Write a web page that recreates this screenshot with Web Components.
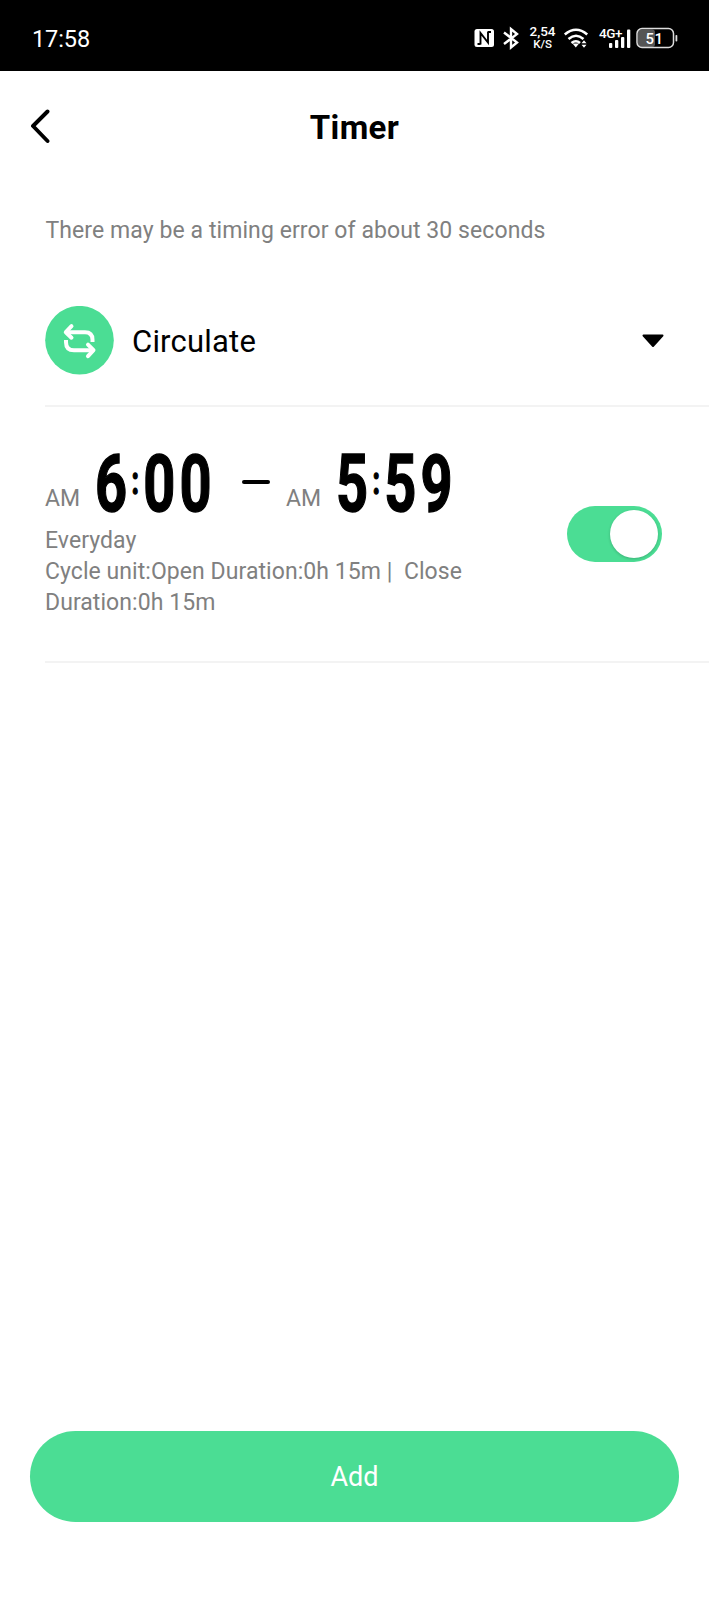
<!DOCTYPE html>
<html lang="en">
<head>
<meta charset="utf-8">
<title>Timer</title>
<style>
    body {
        margin: 0;
        background: #fff;
        font-family: Roboto, 'Liberation Sans', sans-serif;
    }
</style>
</head>
<body>

<timer-screen>
    <status-bar slot="status" time="17:58" battery="51"></status-bar>
    <nav-header slot="header">Timer</nav-header>
    <mode-row>Circulate</mode-row>
    <timer-card from="6:00" to="5:59">
        <div>Everyday</div>
        <div>Cycle unit:Open Duration:0h 15m |&nbsp; Close</div>
        <div>Duration:0h 15m</div>
    </timer-card>
    <add-button slot="footer">Add</add-button>
</timer-screen>

<script>
// small helper, every component clones its own template
function makeTemplate(html) {
    const template = document.createElement('template');
    template.innerHTML = html;
    return template;
}

// the whole screen
const screenTemplate = makeTemplate(`
    <style>
        :host {
            display: flex;
            flex-direction: column;
            height: 1600px;
            background: #fff;
        }

        .hint {
            margin: 0;
            padding: 32px 0 0 45.5px;
            height: 79px;
            box-sizing: border-box;
            font-size: 23px;
            line-height: 32px;
            letter-spacing: 0.08px;
            color: #808080;
            white-space: nowrap;
        }

        main {
            flex: 1;
        }
    </style>

    <slot name="status"></slot>
    <slot name="header"></slot>
    <main>
        <p class="hint">There may be a timing error of about 30 seconds</p>
        <slot></slot>
    </main>
    <slot name="footer"></slot>
`);

class TimerScreen extends HTMLElement {
    constructor() {
        super();
        this.attachShadow({ mode: 'open' });
        this.shadowRoot.appendChild(screenTemplate.content.cloneNode(true));
    }
}

// phone status bar
const statusTemplate = makeTemplate(`
    <style>
        :host {
            display: flex;
            justify-content: space-between;
            height: 71px;
            padding: 0 30px 0 32px;
            box-sizing: border-box;
            background: #000;
            color: #fff;
        }

        .time {
            padding-top: 25px;
            font-size: 23.5px;
            line-height: 28px;
            letter-spacing: -0.1px;
        }

        svg {
            display: block;
            margin-top: 20px;
        }
    </style>

    <span class="time"></span>
    <svg width="207" height="36" viewBox="472 20 207 36" fill="#fff" font-family="Roboto, sans-serif">
        <!-- nfc -->
        <rect x="474.500" y="29" width="19.500" height="18" rx="2.500"/>
        <path d="M480.500 44.500V33L488 42.500V31.500M477.500 44h3M488 32h3" fill="none" stroke="#000" stroke-width="1.900"/>
        <!-- bluetooth -->
        <path d="M504 32.500l13 10-6 5V29l6 5-13 10" fill="none" stroke="#fff" stroke-width="2.400"/>
        <!-- network speed -->
        <text x="542.500" y="36" font-size="13.500" font-weight="500" text-anchor="middle">2,54</text>
        <text x="542.500" y="48" font-size="11.500" font-weight="500" text-anchor="middle">K/S</text>
        <!-- wifi -->
        <g fill="none" stroke="#fff" stroke-width="2.600">
            <path d="M564.800 34.500q11.200-9.500 22.400 0"/>
            <path d="M568.500 39q7.500-6.500 15 0"/>
            <path d="M571.500 43q4.500-3.500 8.500 0"/>
        </g>
        <path d="M572.500 43.500h6.500l-3.200 4z"/>
        <path d="M581.500 43.200l2.500-3 2.500 3zM581.500 44.800l2.500 3 2.500-3z"/>
        <!-- signal -->
        <text x="599" y="37.500" font-size="13.500" font-weight="500" textLength="23.500">4G+</text>
        <rect x="609" y="43" width="3.300" height="5" rx="1"/>
        <rect x="615" y="40" width="3.300" height="8" rx="1"/>
        <rect x="621" y="37" width="3.300" height="11" rx="1"/>
        <rect x="627" y="29.500" width="3.300" height="18.500" rx="1"/>
        <!-- battery -->
        <rect x="638" y="29.500" width="17" height="17.500" rx="3" fill="#555"/>
        <rect x="637" y="28.500" width="36.500" height="19" rx="5" fill="none" stroke="#ddd" stroke-width="1.500"/>
        <rect x="675.500" y="35" width="1.800" height="6.500" rx="0.800" fill="#ddd"/>
        <text class="battery" x="654.500" y="43.500" font-size="15" font-weight="500" text-anchor="middle" letter-spacing="0.500"></text>
    </svg>
`);

class StatusBar extends HTMLElement {
    constructor() {
        super();
        this.attachShadow({ mode: 'open' });
        this.shadowRoot.appendChild(statusTemplate.content.cloneNode(true));
        this.shadowRoot.querySelector('.time').textContent = this.getAttribute('time');
        this.shadowRoot.querySelector('.battery').textContent = this.getAttribute('battery');
    }
}

// back arrow and the title
const headerTemplate = makeTemplate(`
    <style>
        :host {
            display: grid;
            grid-template-columns: 60px 1fr 60px;
            align-items: center;
            height: 112px;
        }

        svg {
            margin-left: 29px;
        }

        h1 {
            margin: 0;
            padding-top: 2px;
            font-size: 33px;
            line-height: 40px;
            font-weight: 700;
            letter-spacing: 0.4px;
            text-align: center;
            color: #000;
        }
    </style>

    <svg width="24" height="36" viewBox="0 0 24 36" fill="none" stroke="#000" stroke-width="3.900" stroke-linecap="round" stroke-linejoin="round">
        <path d="M18.500 2.500L4 17l14.500 15"/>
    </svg>
    <h1><slot></slot></h1>
`);

class NavHeader extends HTMLElement {
    constructor() {
        super();
        this.attachShadow({ mode: 'open' });
        this.shadowRoot.appendChild(headerTemplate.content.cloneNode(true));
    }
}

// dropdown row with the round icon
const modeTemplate = makeTemplate(`
    <style>
        :host {
            display: flex;
            align-items: center;
            height: 145px;
            margin-left: 45px;
            padding: 13px 44px 0 0;
            box-sizing: border-box;
            border-bottom: 2px solid #f3f3f3;
        }

        .label {
            flex: 1;
            margin-left: 18px;
            padding-top: 3px;
            font-size: 31px;
            letter-spacing: 0.2px;
            color: #000;
        }

        .caret {
            margin-top: 2px;
        }
    </style>

    <svg width="69" height="69" viewBox="0 0 69 69">
        <circle cx="34.500" cy="34.200" r="34.300" fill="#4bdd94"/>
        <g fill="none" stroke="#fff" stroke-width="4" stroke-linejoin="round">
            <path d="M21.500 26.200H40q7.500 0 7.500 7.500V36"/>
            <path d="M26.500 20.200L20.800 26.200l5.700 5.500" stroke-linecap="round"/>
            <path d="M48 44.200H29q-8 0-8-8V34"/>
            <path d="M43 50.200l5.500-6-5.500-5.500" stroke-linecap="round"/>
        </g>
    </svg>
    <span class="label"><slot></slot></span>
    <svg class="caret" width="24" height="14" viewBox="0 0 24 14">
        <path d="M2.500 1.500h19L12 12z" stroke="#000" stroke-width="2" stroke-linejoin="round"/>
    </svg>
`);

class ModeRow extends HTMLElement {
    constructor() {
        super();
        this.attachShadow({ mode: 'open' });
        this.shadowRoot.appendChild(modeTemplate.content.cloneNode(true));
    }
}

// big condensed digits
class ClockTime extends HTMLElement {
    constructor() {
        super();
        this.attachShadow({ mode: 'open' });
    }

    connectedCallback() {
        const [hour, minute] = this.getAttribute('value').split(':');

        // digits are squeezed to 70% of their width, the stroke makes up for the lost weight
        this.shadowRoot.innerHTML = `
            <style>
                :host {
                    display: block;
                }

                /* larger than the digits, so the line box of the font fits in */
                svg {
                    display: block;
                    margin: -24px -4px -20px;
                }
            </style>
            <svg width="121" height="106" viewBox="-4 -24 121 106" font-family="Roboto, sans-serif" font-weight="700" text-anchor="middle" stroke="#000" stroke-width="1.400">
                <text transform="scale(0.700 1)" font-size="80"><tspan x="20" y="58.700">${hour}</tspan><tspan x="54.500" y="42.500" font-size="38">:</tspan><tspan x="88.900" y="58.700">${minute[0]}</tspan><tspan x="140.700" y="58.700">${minute[1]}</tspan></text>
            </svg>
        `;
    }
}

// on/off switch
const switchTemplate = makeTemplate(`
    <style>
        :host {
            display: flex;
            justify-content: flex-end;
            align-items: center;
            width: 95px;
            height: 56px;
            padding-right: 4px;
            box-sizing: border-box;
            border-radius: 28px;
            background: #4bdd94;
        }

        .knob {
            width: 48px;
            height: 48px;
            border-radius: 50%;
            background: #fff;
            box-shadow: 0 1px 3px rgba(0, 0, 0, 0.2);
        }
    </style>

    <div class="knob"></div>
`);

class ToggleSwitch extends HTMLElement {
    constructor() {
        super();
        this.attachShadow({ mode: 'open' });
        this.shadowRoot.appendChild(switchTemplate.content.cloneNode(true));
    }
}

// one timer in the list
const cardTemplate = makeTemplate(`
    <style>
        :host {
            display: flex;
            align-items: center;
            justify-content: space-between;
            height: 256px;
            margin-left: 45px;
            padding-right: 47px;
            box-sizing: border-box;
            border-bottom: 2px solid #f3f3f3;
            color: #808080;
        }

        .info {
            align-self: flex-start;
            padding-top: 45px;
        }

        .range {
            display: flex;
            align-items: flex-start;
            height: 62px;
        }

        .period {
            width: 52px;
            padding-top: 33px;
            font-size: 23px;
            line-height: 28px;
        }

        clock-time {
            width: 113px;
            color: #000;
            fill: #000;
        }

        .dash {
            width: 28px;
            height: 4px;
            margin: 28px 16px 0 32px;
            border-radius: 2px;
            background: #000;
        }

        .details {
            margin-top: 11px;
            font-size: 23px;
            line-height: 31px;
            letter-spacing: 0.06px;
            white-space: nowrap;
        }
    </style>

    <div class="info">
        <div class="range">
            <span class="period">AM</span>
            <clock-time class="from"></clock-time>
            <div class="dash"></div>
            <span class="period">AM</span>
            <clock-time class="to"></clock-time>
        </div>
        <div class="details"><slot></slot></div>
    </div>
    <toggle-switch></toggle-switch>
`);

class TimerCard extends HTMLElement {
    constructor() {
        super();
        this.attachShadow({ mode: 'open' });
        const content = cardTemplate.content.cloneNode(true);
        content.querySelector('.from').setAttribute('value', this.getAttribute('from'));
        content.querySelector('.to').setAttribute('value', this.getAttribute('to'));
        this.shadowRoot.appendChild(content);
    }
}

// bottom button
const buttonTemplate = makeTemplate(`
    <style>
        :host {
            display: block;
            padding: 0 30px 78px;
        }

        button {
            display: block;
            width: 100%;
            height: 91px;
            padding: 0;
            border: 0;
            border-radius: 46px;
            background: #4bdd94;
            color: #fff;
            font-family: inherit;
            font-size: 27px;
        }
    </style>

    <button><slot></slot></button>
`);

class AddButton extends HTMLElement {
    constructor() {
        super();
        this.attachShadow({ mode: 'open' });
        this.shadowRoot.appendChild(buttonTemplate.content.cloneNode(true));
    }
}

customElements.define('clock-time', ClockTime);
customElements.define('toggle-switch', ToggleSwitch);
customElements.define('timer-screen', TimerScreen);
customElements.define('status-bar', StatusBar);
customElements.define('nav-header', NavHeader);
customElements.define('mode-row', ModeRow);
customElements.define('timer-card', TimerCard);
customElements.define('add-button', AddButton);
</script>
</body>
</html>
